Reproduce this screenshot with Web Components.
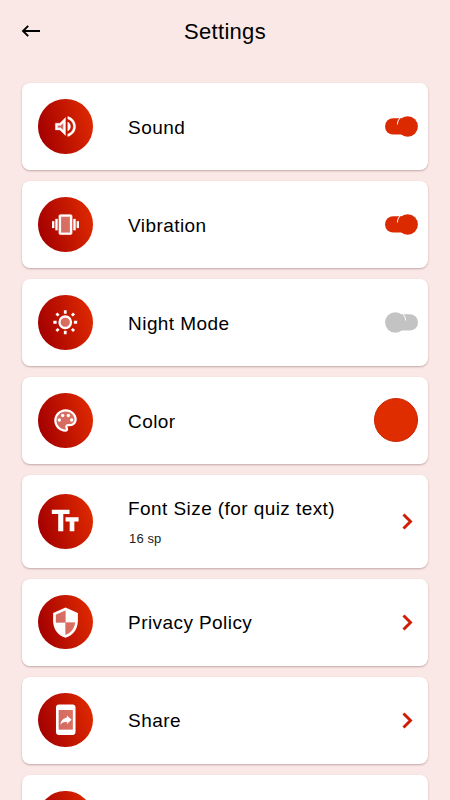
<!DOCTYPE html>
<html lang="en">
<head>
<meta charset="utf-8">
<title>Settings</title>
<style>
    html, body {
        margin: 0;
        height: 100%;
        overflow: hidden;
        background: #fae8e6;
    }
</style>
</head>
<body>
<settings-page></settings-page>

<script>
const ICONS = {
    sound: { size: 27, body: `
        <path opacity=".35" d="M5 11v2h2.800L10 15.200V8.800L7.800 11z"/>
        <path stroke="#fff" stroke-width=".3" d="M3 9v6h4l5 5V4L7 9H3zm7-.2v6.400L7.800 13H5v-2h2.800L10 8.800zM16.500 12c0-1.800-1-3.300-2.500-4v8c1.500-.7 2.500-2.200 2.500-4zM14 3.200v2.100c2.900.9 5 3.500 5 6.700s-2.100 5.800-5 6.700v2.100c4-.9 7-4.500 7-8.800s-3-7.900-7-8.800z"/>` },
    vibration: { size: 27, body: `
        <path opacity=".38" d="M8 5h8v14H8z"/>
        <path stroke="#fff" stroke-width=".2" d="M0 9h2v6H0zM3 7h2v10H3zM19 7h2v10h-2zM22 9h2v6h-2zM16.500 3h-9C6.700 3 6 3.700 6 4.500v15c0 .8.700 1.500 1.500 1.500h9c.8 0 1.500-.7 1.500-1.500v-15c0-.8-.7-1.500-1.500-1.500zM16 19H8V5h8v14z"/>` },
    night: { size: 26.5, body: `
        <circle cx="12" cy="12" r="4.200" opacity=".38"/>
        <circle cx="12" cy="12" r="5.200" fill="none" stroke="#fff" stroke-width="2.100"/>
        <path fill="none" stroke="#fff" stroke-width="2.500" d="M12 1.200v3M12 19.800v3M1.200 12h3M19.800 12h3M4 4l2 2M18 18l2 2M20 4l-2 2M6 18l-2 2"/>` },
    color: { size: 27, body: `
        <path opacity=".38" d="M12 3a9 9 0 0 0 0 18c.8 0 1.500-.7 1.500-1.500 0-1.500-.9-1.300-.9-2.200 0-.9.700-1.600 1.700-1.600H16c2.800 0 5-2.200 5-5C21 6.500 17 3 12 3z"/>
        <path d="M12 22C6.500 22 2 17.500 2 12S6.500 2 12 2s10 4 10 9c0 3.300-2.700 6-6 6h-1.800c-.3 0-.5.200-.5.500 0 .1.100.2.100.3.400.5.600 1.100.6 1.700.1 1.400-1 2.500-2.400 2.500zm0-18c-4.400 0-8 3.600-8 8s3.600 8 8 8c.3 0 .5-.2.500-.5 0-.2-.1-.3-.1-.4-.4-.5-.6-1-.6-1.600 0-1.400 1.100-2.500 2.500-2.500H16c2.200 0 4-1.800 4-4 0-3.900-3.600-7-8-7z"/>
        <circle cx="6.500" cy="11.500" r="1.500"/><circle cx="9.500" cy="7.500" r="1.500"/><circle cx="14.500" cy="7.500" r="1.500"/><circle cx="17.500" cy="11.500" r="1.500"/>` },
    size: { size: 34, body: `
        <path d="M2.700 4.100h12.500V7h-4.400v12.200H7.200V7H2.700zM12.400 9.400h9.200v2.900h-3v6.900h-3.300v-6.900h-2.900z"/>` },
    privacy: { size: 33, body: `
        <path opacity=".38" d="M12 3.200V12H5V6.300zM12 12h7c-.5 4.100-3.300 7.800-7 8.900z"/>
        <path d="M12 1 3 5v6c0 5.600 3.800 10.700 9 12 5.200-1.300 9-6.400 9-12V5l-9-4zm0 19.900V12H5V6.300l7-3.100V12h7c-.5 4.100-3.300 7.800-7 8.900z"/>` },
    share: { size: 33.5, body: `
        <path opacity=".38" d="M7 5h10v14H7z"/>
        <path d="M17 1H7c-1.100 0-2 .9-2 2v18c0 1.100.9 2 2 2h10c1.100 0 2-.9 2-2V3c0-1.100-.9-2-2-2zm0 18H7V5h10v14z"/>
        <path d="M12.800 10.400V8.900L16.200 12l-3.400 3.100v-1.700c-2.200 0-3.700.7-4.800 2.200.4-2.100 1.700-4.700 4.800-5.200z"/>` },
    rate: { size: 28, body: `
        <path d="M12 17.300l6.200 3.700-1.600-7L22 9.200l-7.200-.6L12 2 9.200 8.600 2 9.200 7.500 14l-1.700 7z"/>` }
};

class SettingIcon extends HTMLElement {
    constructor() {
        super();
        this.shadow = this.attachShadow( { mode: 'open' } );
    }

    connectedCallback() {
        const icon = ICONS[this.getAttribute( 'name' )];
        this.shadow.innerHTML = `
            <style>
                :host {
                    flex: none;
                    display: flex;
                    width: 54.6px;
                    height: 54.6px;
                    align-items: center;
                    justify-content: center;
                    border-radius: 50%;
                    background: linear-gradient(75deg, #a30000 8%, #de2900 92%);
                }
            </style>
            <svg width="${icon.size}" height="${icon.size}" viewBox="0 0 24 24" fill="#fff">${icon.body}</svg>
        `;
    }
}

class ToggleSwitch extends HTMLElement {
    constructor() {
        super();
        this.shadow = this.attachShadow( { mode: 'open' } );
    }

    connectedCallback() {
        this.shadow.innerHTML = `
            <style>
                :host {
                    display: block;
                    margin-right: -.7px;
                    color: #c3c3c3;
                }

                :host([checked]) {
                    color: #dc2a00;
                }

                svg {
                    display: block;
                }

                :host([checked]) svg {
                    transform: scaleX(-1);
                }
            </style>
            <svg width="33" height="21" viewBox="0 0 33 21" fill="currentColor">
                <rect x="5" y="2.200" width="28" height="16.400" rx="8.200"/>
                <circle cx="10.300" cy="10.500" r="10.200"/>
                <path d="M18.100 1.900q2.600 2.900 2.500 6.600" fill="none" stroke="#fff" stroke-width="1"/>
            </svg>
        `;
    }
}

class ChevronRight extends HTMLElement {
    constructor() {
        super();
        this.shadow = this.attachShadow( { mode: 'open' } );
    }

    connectedCallback() {
        this.shadow.innerHTML = `
            <style>
                :host {
                    display: block;
                    margin-right: 4px;
                }

                svg {
                    display: block;
                }
            </style>
            <svg width="11" height="17" viewBox="0 0 11 17">
                <path d="M1.500 1.500l7 7-7 7" fill="none" stroke="#cf1d05" stroke-width="2.900"/>
            </svg>
        `;
    }
}

class ColorSwatch extends HTMLElement {
    constructor() {
        super();
        this.shadow = this.attachShadow( { mode: 'open' } );
    }

    connectedCallback() {
        this.shadow.innerHTML = `
            <style>
                :host {
                    display: block;
                    box-sizing: border-box;
                    width: 44px;
                    height: 44px;
                    margin: -1px -.7px 0 0;
                    border-radius: 50%;
                    border: 1px solid #c92400;
                    background: #df2d00;
                }
            </style>
        `;
    }
}

class SettingRow extends HTMLElement {
    constructor() {
        super();
        this.shadow = this.attachShadow( { mode: 'open' } );
    }

    connectedCallback() {
        this.shadow.innerHTML = `
            <style>
                :host {
                    flex: none;
                    display: flex;
                    box-sizing: border-box;
                    height: 87px;
                    padding: 0 11px 0 16px;
                    align-items: center;
                    border-radius: 8px;
                    background: #fff;
                    box-shadow: 0 1px 2px rgba(70,20,20,.3);
                }

                :host([tall]) {
                    height: 92.500px;
                }

                .text {
                    flex: 1;
                    margin: 2px 0 0 35.500px;
                    white-space: nowrap;
                    color: #000;
                    font-size: 19px;
                    line-height: 24px;
                    letter-spacing: .42px;
                }

                :host([tall]) .text {
                    margin-top: 2px;
                }

                ::slotted([slot=note]) {
                    display: block;
                    margin: 10px 0 0 1px;
                    font-size: 13px;
                    line-height: 16px;
                    letter-spacing: .1px;
                    color: #222;
                }
            </style>
            <setting-icon name="${this.getAttribute( 'icon' )}"></setting-icon>
            <div class="text"><slot></slot><slot name="note"></slot></div>
            <slot name="action"></slot>
        `;
    }
}

class SettingsPage extends HTMLElement {
    constructor() {
        super();
        this.shadow = this.attachShadow( { mode: 'open' } );
    }

    connectedCallback() {
        this.shadow.innerHTML = `
            <style>
                :host {
                    display: flex;
                    flex-direction: column;
                    height: 800px;
                    overflow: hidden;
                    font-family: "Liberation Sans", Arial, sans-serif;
                }

                header {
                    flex: none;
                    display: grid;
                    grid-template-columns: 20px 1fr 20px;
                    align-items: center;
                    height: 62px;
                    padding: 0 21px;
                }

                header svg {
                    display: block;
                }

                h1 {
                    margin: 2px 0 0;
                    text-align: center;
                    font-size: 22px;
                    font-weight: 400;
                    letter-spacing: .3px;
                }

                main {
                    flex: 1;
                    min-height: 0;
                    display: flex;
                    flex-direction: column;
                    gap: 11px;
                    padding: 21px 22px 0;
                    overflow: hidden;
                }
            </style>
            <header>
                <svg width="20" height="14" viewBox="0 0 20 14">
                    <path d="M19 7H2M7.200 1.800L2 7l5.200 5.200" fill="none" stroke="#000" stroke-width="1.900"/>
                </svg>
                <h1>Settings</h1>
            </header>
            <main>
                <setting-row icon="sound">Sound<toggle-switch slot="action" checked></toggle-switch></setting-row>
                <setting-row icon="vibration">Vibration<toggle-switch slot="action" checked></toggle-switch></setting-row>
                <setting-row icon="night">Night Mode<toggle-switch slot="action"></toggle-switch></setting-row>
                <setting-row icon="color">Color<color-swatch slot="action"></color-swatch></setting-row>
                <setting-row icon="size" tall>Font Size (for quiz text)<span slot="note">16 sp</span><chevron-right slot="action"></chevron-right></setting-row>
                <setting-row icon="privacy">Privacy Policy<chevron-right slot="action"></chevron-right></setting-row>
                <setting-row icon="share">Share<chevron-right slot="action"></chevron-right></setting-row>
                <setting-row icon="rate"></setting-row>
            </main>
        `;
    }
}

customElements.define('setting-icon', SettingIcon);
customElements.define('toggle-switch', ToggleSwitch);
customElements.define('chevron-right', ChevronRight);
customElements.define('color-swatch', ColorSwatch);
customElements.define('setting-row', SettingRow);
customElements.define('settings-page', SettingsPage);
</script>
</body>
</html>
